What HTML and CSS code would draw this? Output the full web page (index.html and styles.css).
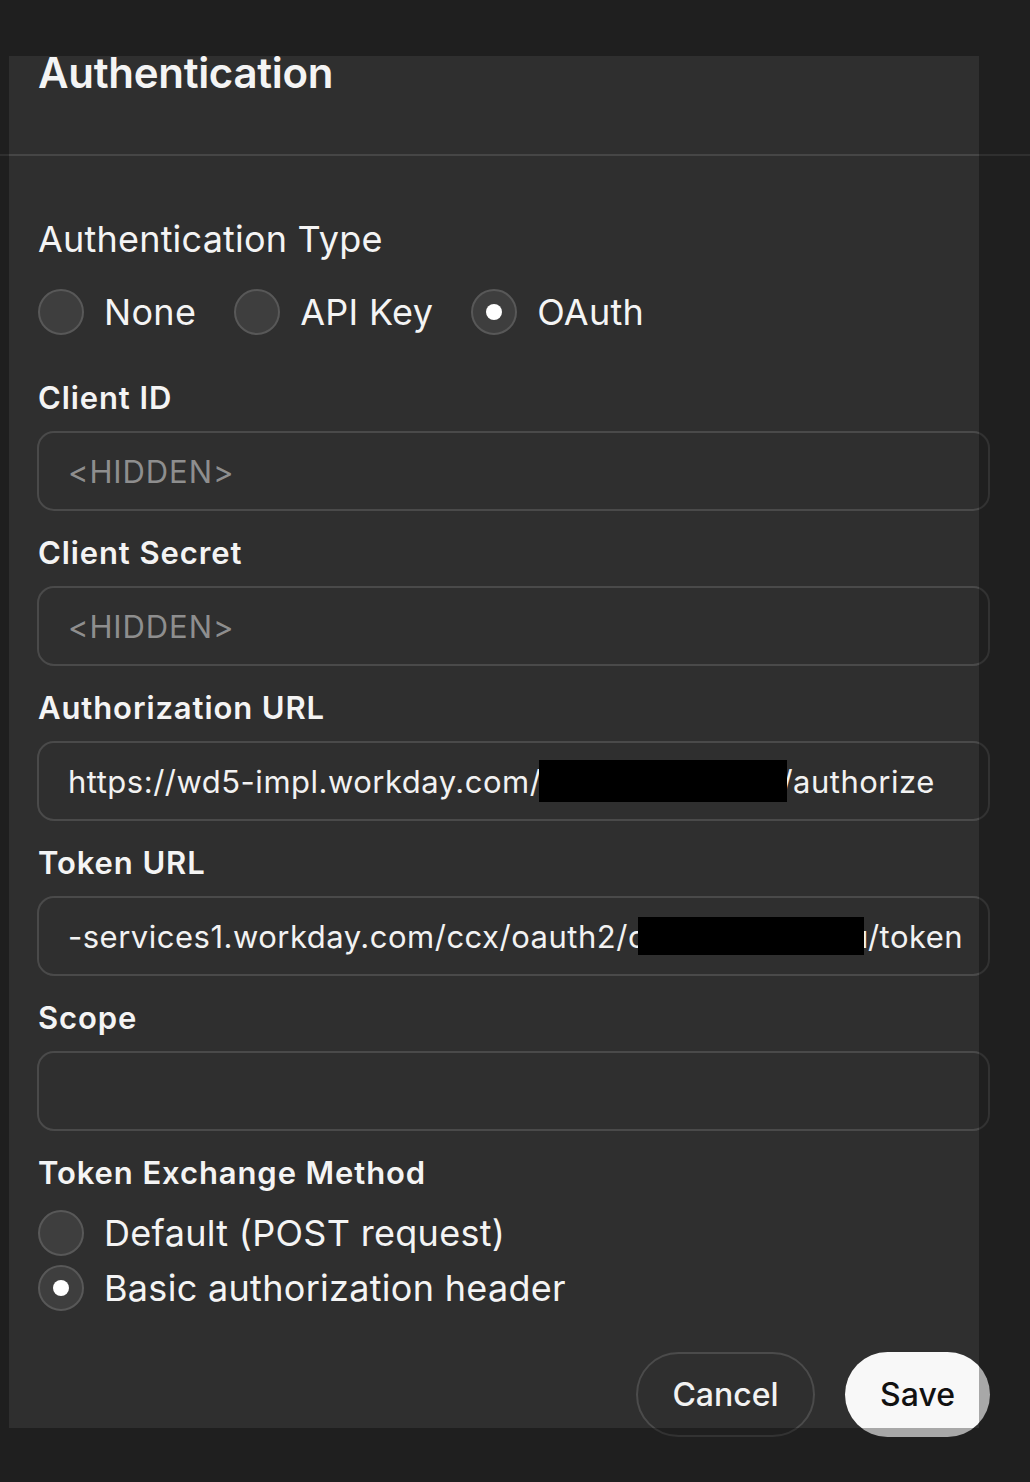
FILE: index.html
```html
<!DOCTYPE html>
<html lang="en">
<head>
<meta charset="utf-8">
<title>Authentication</title>
<link rel="stylesheet" href="styles.css">
</head>
<body>
<div class="sheet">
  <header class="header">
    <h1 class="title">Authentication</h1>
  </header>
  <main class="form">
    <div class="type-heading">Authentication Type</div>
    <div class="radio-row">
      <label class="radio"><span class="dot"></span><span class="radio-text">None</span></label>
      <label class="radio"><span class="dot"></span><span class="radio-text">API Key</span></label>
      <label class="radio"><span class="dot checked"></span><span class="radio-text">OAuth</span></label>
    </div>

    <div class="field">
      <div class="label">Client ID</div>
      <div class="input placeholder">&lt;HIDDEN&gt;</div>
    </div>
    <div class="field">
      <div class="label">Client Secret</div>
      <div class="input placeholder">&lt;HIDDEN&gt;</div>
    </div>
    <div class="field">
      <div class="label">Authorization URL</div>
      <div class="input"><span>https://wd5-impl.workday.com/</span><span class="redact redact-auth"></span><span>/authorize</span></div>
    </div>
    <div class="field">
      <div class="label">Token URL</div>
      <div class="input"><span>-services1.workday.com/ccx/oauth2/c</span><span class="redact redact-token"></span><span>u/token</span></div>
    </div>
    <div class="field">
      <div class="label">Scope</div>
      <div class="input"></div>
    </div>

    <div class="label">Token Exchange Method</div>
    <div class="radio-col">
      <label class="radio"><span class="dot"></span><span class="radio-text">Default (POST request)</span></label>
      <label class="radio"><span class="dot checked"></span><span class="radio-text">Basic authorization header</span></label>
    </div>

    <div class="actions">
      <button class="btn btn-cancel" type="button">Cancel</button>
      <button class="btn btn-save" type="button">Save</button>
    </div>
  </main>
</div>
<div class="spotlight"></div>
</body>
</html>
```

FILE: styles.css
```css
html, body {
  margin: 0;
  padding: 0;
}
body {
  background: #2f2f2f;
  color: #f4f4f4;
  font-family: Inter, "Noto Sans", "Liberation Sans", sans-serif;
  width: 1030px;
  height: 1482px;
  overflow: hidden;
  position: relative;
}
.header {
  padding: 51px 0 60px 38px;
  border-bottom: 2px solid #464646;
}
.title {
  margin: 0;
  font-size: 42px;
  line-height: 43px;
  font-weight: 600;
  letter-spacing: -0.3px;
}
.form {
  padding: 61px 0 0 37px;
  width: 953px;
}
.type-heading {
  font-size: 36px;
  line-height: 44px;
  font-weight: 400;
  letter-spacing: 0.2px;
  padding-left: 1px;
}
.radio-row {
  display: flex;
  gap: 38px;
  margin-top: 28px;
  padding-left: 1px;
}
.radio {
  display: flex;
  align-items: center;
  gap: 20px;
  height: 46px;
}
.radio-text {
  font-size: 36px;
  line-height: 46px;
  letter-spacing: 0.3px;
}
.dot {
  box-sizing: border-box;
  width: 46px;
  height: 46px;
  border-radius: 50%;
  background: #3e3e3e;
  border: 2px solid #585858;
  display: flex;
  align-items: center;
  justify-content: center;
  flex: none;
}
.dot.checked::after {
  content: "";
  width: 16px;
  height: 16px;
  border-radius: 50%;
  background: #ffffff;
}
.radio-row + .field {
  margin-top: 41px;
}
.label {
  font-size: 31px;
  line-height: 44px;
  font-weight: 600;
  letter-spacing: 0.9px;
  margin-bottom: 11px;
  padding-left: 1px;
}
.input {
  box-sizing: border-box;
  height: 80px;
  border: 2px solid #4a4a4a;
  border-radius: 17px;
  margin-bottom: 20px;
  padding-left: 29px;
  display: flex;
  align-items: center;
  font-size: 31px;
  letter-spacing: 0.5px;
  color: #f2f2f2;
  white-space: nowrap;
  overflow: hidden;
}
.input.placeholder {
  color: #8e8e8e;
  letter-spacing: 0.9px;
}
.redact {
  display: inline-block;
  background: #000;
  flex: none;
  position: relative;
  z-index: 1;
}
.redact-auth {
  width: 248px;
  height: 42px;
  margin-left: -2px;
  margin-right: -6px;
}
.redact-token {
  width: 226px;
  height: 38px;
  margin-left: -8px;
  margin-right: -14px;
}
.radio-col {
  display: flex;
  flex-direction: column;
  gap: 9px;
  margin-top: 15px;
  padding-left: 1px;
}
.actions {
  display: flex;
  justify-content: flex-end;
  gap: 30px;
  margin-top: 41px;
}
.btn {
  box-sizing: border-box;
  height: 85px;
  border-radius: 43px;
  font-family: inherit;
  font-size: 32px;
  font-weight: 500;
  padding: 0;
}
.btn-cancel {
  width: 179px;
  background: transparent;
  color: #f2f2f2;
  border: 2px solid #4b4b4b;
}
.btn-save {
  width: 145px;
  background: #f8f8f8;
  color: #111;
  border: none;
}
.spotlight {
  position: absolute;
  left: 9px;
  top: 56px;
  width: 970px;
  height: 1372px;
  box-shadow: 0 0 0 2000px rgba(0, 0, 0, 0.32);
  pointer-events: none;
}
```
